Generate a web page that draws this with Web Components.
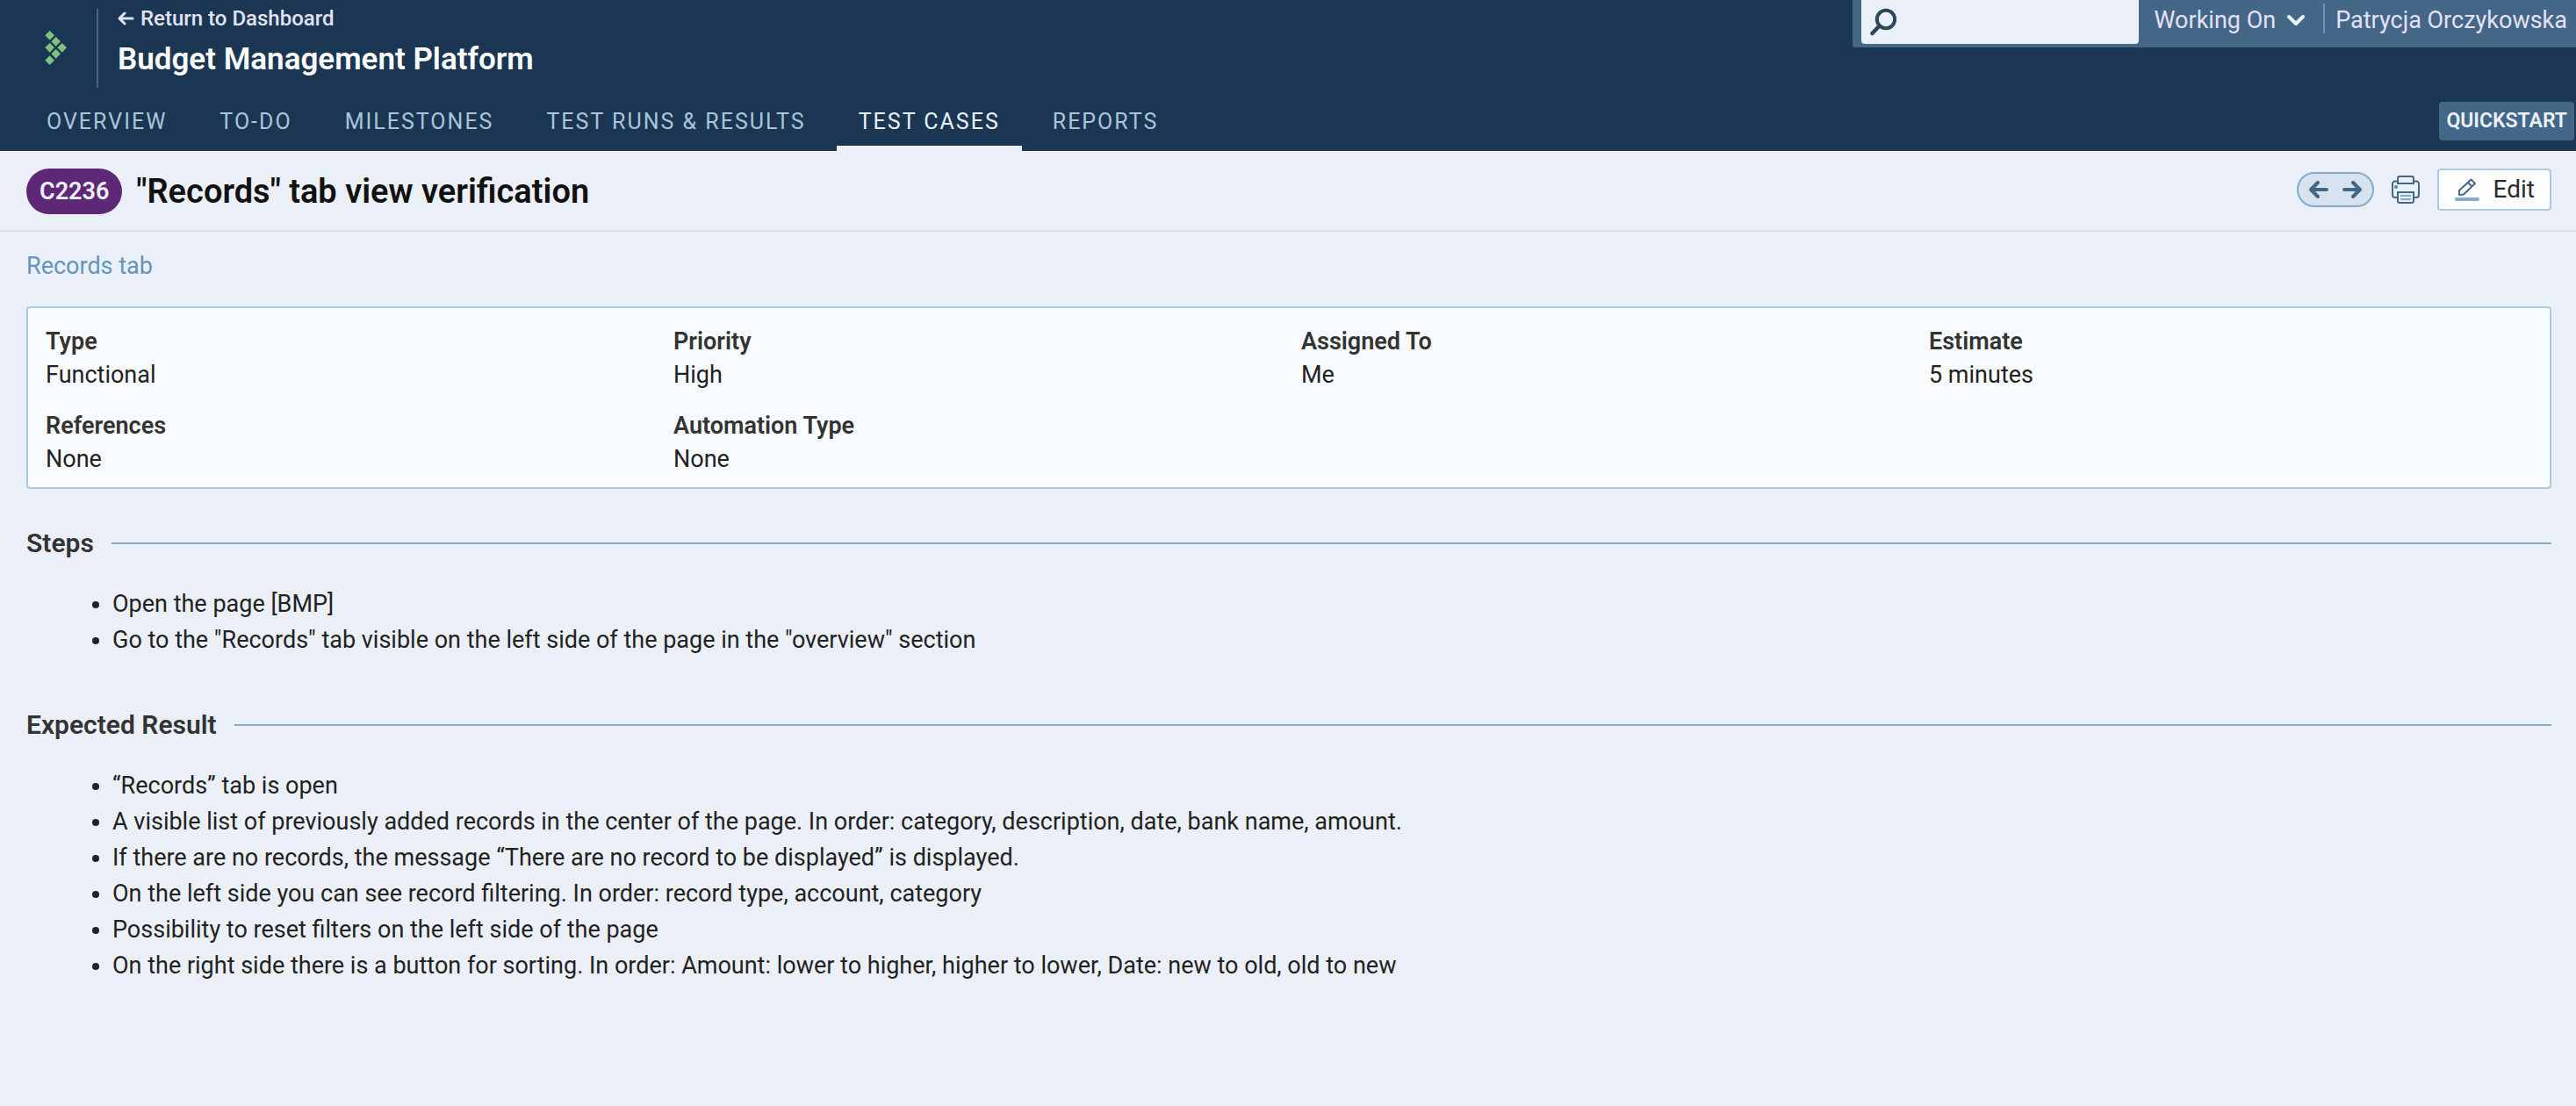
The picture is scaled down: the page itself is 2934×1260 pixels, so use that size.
<!DOCTYPE html>
<html lang="en">
<head>
<meta charset="utf-8">
<title>"Records" tab view verification</title>
<style>
  body { margin: 0; background: #ebf0f8; color: #222; font: 400 27px/38px Roboto, "Liberation Sans", sans-serif; }
</style>
</head>
<body>
<app-header>
  <span slot="project">Budget Management Platform</span>
  <nav-tab href="#overview">OVERVIEW</nav-tab>
  <nav-tab href="#todo">TO-DO</nav-tab>
  <nav-tab href="#milestones">MILESTONES</nav-tab>
  <nav-tab href="#runs">TEST RUNS &amp; RESULTS</nav-tab>
  <nav-tab href="#cases" current>TEST CASES</nav-tab>
  <nav-tab href="#reports">REPORTS</nav-tab>
</app-header>
<case-title code="C2236">"Records" tab view verification</case-title>
<case-body>
  <property-card>
    <property-item label="Type">Functional</property-item>
    <property-item label="Priority">High</property-item>
    <property-item label="Assigned To">Me</property-item>
    <property-item label="Estimate">5 minutes</property-item>
    <property-item label="References">None</property-item>
    <property-item label="Automation Type">None</property-item>
  </property-card>
  <case-section label="Steps">
    <ul>
      <li>Open the page [BMP]</li>
      <li>Go to the "Records" tab visible on the left side of the page in the "overview" section</li>
    </ul>
  </case-section>
  <case-section label="Expected Result">
    <ul>
      <li>“Records” tab is open</li>
      <li>A visible list of previously added records in the center of the page. In order: category, description, date, bank name, amount.</li>
      <li>If there are no records, the message “There are no record to be displayed” is displayed.</li>
      <li>On the left side you can see record filtering. In order: record type, account, category</li>
      <li>Possibility to reset filters on the left side of the page</li>
      <li>On the right side there is a button for sorting. In order: Amount: lower to higher, higher to lower, Date: new to old, old to new</li>
    </ul>
  </case-section>
</case-body>

<script>
const base = `<style>
  *, *::before { box-sizing: border-box; }
  :host { display: block; }
  a { color: inherit; text-decoration: none; }
  button { font: inherit; color: inherit; margin: 0; padding: 0; border: 0; background: none; cursor: pointer; }
  svg { display: block; flex: none; }
</style>`;

function define(name, markup, setup) {
  const template = document.createElement('template');
  template.innerHTML = base + markup;
  customElements.define(name, class extends HTMLElement {
    constructor() {
      super();
      this.attachShadow({ mode: 'open' }).append(template.content.cloneNode(true));
    }
    connectedCallback() { if (setup) setup(this, this.shadowRoot); }
  });
}

define('brand-logo', `<style>:host { flex: none; }</style>
<svg width="26" height="40" viewBox="0 0 78 120" fill="#7fc17f" role="img" aria-label="TestRail">
  <path d="M17 0l16 16-16 16L1 16zM38 21l16 16-16 16-16-16zM17 42l16 16-16 16L1 58zM59 42l16 16-16 16-16-16zM38 63l16 16-16 16-16-16zM17 85l16 16-16 16-16-16z"/>
</svg>`);

define('nav-tab', `<style>
  a { display: flex; height: 66px; align-items: center; padding: 6px 25px 0; border-bottom: 6px solid transparent;
      color: #a9c5da; font-size: 25px; letter-spacing: 2px; white-space: nowrap; }
  :host([current]) a { color: #ebf0f8; border-color: #ebf0f8; }
</style><a><slot></slot></a>`, (host, root) => {
  const link = root.querySelector('a');
  link.href = host.getAttribute('href');
  if (host.hasAttribute('current')) link.setAttribute('aria-current', 'page');
});

define('user-bar', `<style>
  :host { flex: none; }
  .bar { display: flex; height: 54px; align-items: flex-start; padding: 0 10px; background: #446687; border-bottom-left-radius: 4px;
         color: #e2e2f4; font-size: 27px; line-height: 46px; white-space: nowrap; }
  label { display: flex; align-items: center; width: 316px; height: 50px; padding-left: 10px; background: #ebf0f8; border-radius: 0 0 4px 4px; }
  input { flex: 1; min-width: 0; height: 100%; padding: 0 10px; border: 0; outline: 0; background: none; font: inherit; color: #1b3652; }
  button { display: flex; align-items: center; gap: 12px; padding: 0 20px 0 18px; }
  a { position: relative; padding-left: 14px; }
  a::before { content: ""; position: absolute; left: 0; top: 4px; width: 2px; height: 34px; background: #6b93b8; }
</style>
<div class="bar">
  <label><svg width="30" height="32" viewBox="0 0 30 32" fill="none" stroke="#2a475f" stroke-linecap="round">
    <circle cx="18" cy="13" r="10.200" stroke-width="4"/><path d="M10.500 20.500L2.500 29" stroke-width="4.500"/></svg>
    <input type="search" aria-label="Search"></label>
  <button type="button">Working On
    <svg width="22" height="16" viewBox="0 0 22 16" fill="none" stroke="#ebf0f8" stroke-width="4" stroke-linecap="round" stroke-linejoin="round"><path d="M3 4l8 8 8-8"/></svg></button>
  <a href="#profile">Patrycja Orczykowska</a>
</div>`);

define('app-header', `<style>
  header { height: 172px; display: flex; flex-direction: column; justify-content: space-between; background: #1b3652; }
  .top, .bottom { display: flex; justify-content: space-between; }
  .top { align-items: flex-start; }
  .brand { display: flex; align-items: center; height: 90px; margin-top: 10px; padding-left: 51px; }
  .names { display: flex; flex-direction: column; gap: 11px; height: 90px; margin-left: 33px; padding-left: 22px; border-left: 2px solid #446687; white-space: nowrap; }
  .back { display: flex; align-items: center; gap: 7px; color: #e2e2f4; font-size: 24px; font-weight: 500; line-height: 22px; }
  .project { color: #fff; font-size: 35px; font-weight: 600; line-height: 50px; }
  nav { display: flex; gap: 10px; padding-left: 28px; }
  .quick { align-self: flex-start; height: 44px; margin: 10px 2px 0 0; padding: 0 8px; border-radius: 4px; background: #446687; color: #ebf0f8;
           font-size: 23px; font-weight: 600; }
</style>
<header>
  <div class="top">
    <div class="brand"><brand-logo></brand-logo>
      <div class="names">
        <a class="back" href="#dashboard"><svg width="19" height="16" viewBox="0 0 19 16" fill="none" stroke="#e2e2f4" stroke-width="3" stroke-linecap="round" stroke-linejoin="round"><path d="M17 8H2M8 2L2 8l6 6"/></svg>Return to Dashboard</a>
        <div class="project"><slot name="project"></slot></div>
      </div>
    </div>
    <user-bar></user-bar>
  </div>
  <div class="bottom"><nav><slot></slot></nav><button class="quick" type="button">QUICKSTART</button></div>
</header>`);

define('case-actions', `<style>
  :host { display: flex; align-items: center; gap: 20px; }
  .pager { display: flex; align-items: center; gap: 16px; height: 40px; padding: 0 12px; border: 2px solid #87abcb; border-radius: 20px; background: #d6e2ee; }
  .edit { display: flex; align-items: center; gap: 16px; height: 48px; padding: 0 17px 0 18px; border: 2px solid #b0c9de; border-radius: 4px; background: #fff; color: #2b2b2b; font-size: 28px; }
</style>
<div class="pager">
  <button type="button" aria-label="Previous"><svg width="22" height="20" viewBox="0 0 22 20" fill="none" stroke="#446687" stroke-width="4" stroke-linecap="round" stroke-linejoin="round"><path d="M20 10H2M10 2l-8 8 8 8"/></svg></button>
  <button type="button" aria-label="Next"><svg width="22" height="20" viewBox="0 0 22 20" fill="none" stroke="#446687" stroke-width="4" stroke-linecap="round" stroke-linejoin="round"><path d="M2 10h18M12 2l8 8-8 8"/></svg></button>
</div>
<button type="button" aria-label="Print"><svg width="32" height="32" viewBox="0 0 32 32" fill="none" stroke="#446687" stroke-width="2">
  <path d="M7 25H4a3 3 0 0 1-3-3V9.500a3 3 0 0 1 3-3h3M25 25h3a3 3 0 0 0 3-3V9.500a3 3 0 0 0-3-3h-3"/>
  <path d="M7 9V3a2 2 0 0 1 2-2h14a2 2 0 0 1 2 2v6zM7 19h18v10a2 2 0 0 1-2 2H9a2 2 0 0 1-2-2z"/>
  <path d="M10 23h12M10 27h12" stroke="#87abcb"/><circle cx="5" cy="13" r="2" fill="#3f9b72" stroke="none"/></svg></button>
<button class="edit" type="button"><svg width="28" height="26" viewBox="0 0 28 26" fill="none" stroke="#446687" stroke-width="2" stroke-linejoin="round">
  <path d="M5 19v-5L18.500 1.500l4.500 4.500L10 18.500zM15 5l4.500 4.500"/><path d="M2 24h24" stroke="#87abcb" stroke-width="4" stroke-linecap="round"/></svg>Edit</button>`);

define('case-title', `<style>
  .row { display: flex; justify-content: space-between; align-items: center; height: 92px; padding: 0 28px 0 30px; border-bottom: 2px solid #d6e2ee; }
  .name { display: flex; align-items: center; gap: 16px; padding-top: 2px; }
  .code { height: 52px; padding: 0 15px; border-radius: 26px; background: #5e2876; color: #ebf0f8; font-size: 27px; font-weight: 600; line-height: 52px; }
  h1 { margin: 0; color: #111; font-size: 38px; font-weight: 600; line-height: 52px; }
  case-actions { align-self: flex-start; margin-top: 20px; }
</style>
<div class="row"><div class="name"><span class="code"></span><h1><slot></slot></h1></div><case-actions></case-actions></div>`,
(host, root) => { root.querySelector('.code').textContent = host.getAttribute('code'); });

define('case-body', `<style>
  main { padding: 20px 28px 40px 30px; }
  .crumb { display: block; margin-bottom: 27px; color: #6494bd; }
</style>
<main><a class="crumb" href="#records">Records tab</a><slot></slot></main>`);

define('property-card', `<style>
  .card { display: grid; grid-template-columns: repeat(4, 1fr); gap: 20px 28px; padding: 19px 20px 13px; border: 2px solid #b0c9de; border-radius: 4px; background: #f8fbff; }
</style><div class="card"><slot></slot></div>`);

define('property-item', `<style>
  dl, dd { margin: 0; }
  dt { color: #333; font-weight: 600; }
</style><dl><dt></dt><dd><slot></slot></dd></dl>`,
(host, root) => { root.querySelector('dt').textContent = host.getAttribute('label'); });

define('case-section', `<style>
  :host { margin-top: 42px; }
  h2 { display: flex; align-items: center; gap: 20px; margin: 0 0 29px; color: #333; font-size: 30px; font-weight: 600; line-height: 40px; }
  h2::after { content: ""; flex: 1; height: 2px; background: #87abcb; }
  ::slotted(ul) { margin: 0 0 56px; padding-left: 98px; line-height: 41px; }
</style><section><h2></h2><slot></slot></section>`,
(host, root) => { root.querySelector('h2').textContent = host.getAttribute('label'); });
</script>
</body>
</html>
